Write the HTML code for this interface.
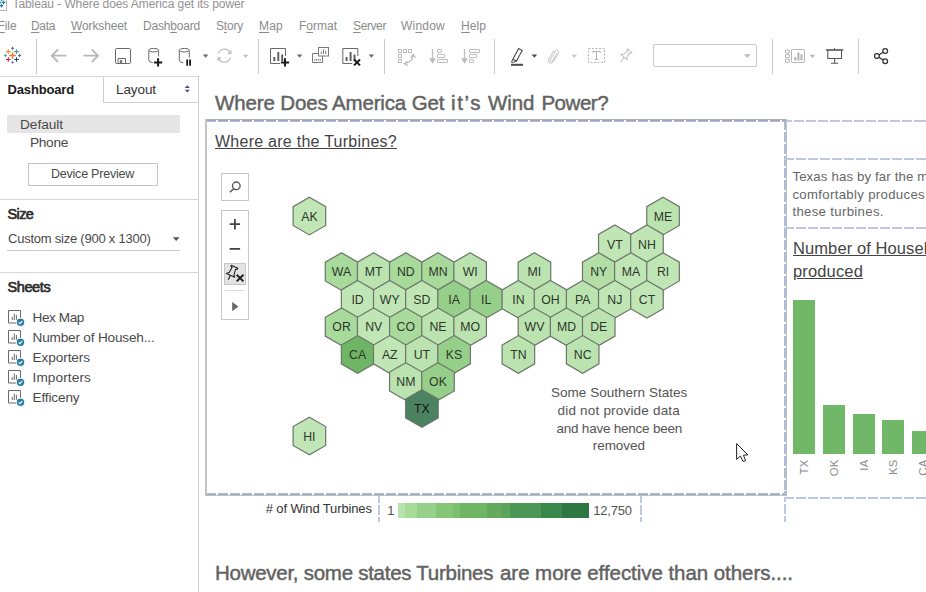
<!DOCTYPE html>
<html><head><meta charset="utf-8"><title>Tableau</title>
<style>
html,body{margin:0;padding:0;overflow:hidden;}
html{width:926px;height:592px;}
body{width:926px;height:592px;overflow:hidden;background:#fff;position:relative;font-family:"Liberation Sans", sans-serif;}
.abs{position:absolute;}
.t{position:absolute;white-space:nowrap;font-family:"Liberation Sans", sans-serif;}
.t u{text-decoration:underline;text-underline-offset:1.5px;text-decoration-thickness:1px;}
.rot{font-size:11.3px;color:#8a8a8a;transform-origin:0 0;transform:translate(0,32.6px) rotate(-90deg);white-space:nowrap;line-height:14px;letter-spacing:0.2px;width:30px;text-align:right;}
</style></head><body>
<!-- left panel -->
<div class="abs" style="left:0;top:76px;width:198px;height:1px;background:#d6d6d6"></div>
<div class="abs" style="left:198px;top:76px;width:1px;height:516px;background:#d0d0d0"></div>
<div class="abs" style="left:103px;top:76px;width:95px;height:27px;border-left:1px solid #d0d0d0;border-bottom:1px solid #d0d0d0;box-sizing:border-box"></div>
<div class="abs" style="left:7px;top:115px;width:173px;height:17.5px;background:#e6e6e6"></div>
<div class="abs" style="left:28px;top:163px;width:130px;height:23px;border:1px solid #c4c4c4;box-sizing:border-box;background:#fff"></div>
<div class="abs" style="left:0;top:199px;width:198px;height:1px;background:#d6d6d6"></div>
<div class="abs" style="left:7px;top:250px;width:173px;height:1px;background:#c8c8c8"></div>
<div class="abs" style="left:0;top:272px;width:198px;height:1px;background:#d6d6d6"></div>
<!-- toolbar separators -->
<div class="abs" style="left:36px;top:39px;width:1px;height:35px;background:#c8c8c8"></div>
<div class="abs" style="left:258px;top:39px;width:1px;height:35px;background:#c8c8c8"></div>
<div class="abs" style="left:384px;top:39px;width:1px;height:35px;background:#c8c8c8"></div>
<div class="abs" style="left:494px;top:39px;width:1px;height:35px;background:#c8c8c8"></div>
<div class="abs" style="left:772px;top:39px;width:1px;height:35px;background:#c8c8c8"></div>
<div class="abs" style="left:858px;top:39px;width:1px;height:35px;background:#c8c8c8"></div>
<div class="abs" style="left:653px;top:44px;width:104px;height:22.5px;border:1px solid #c8c8c8;border-radius:2px;box-sizing:border-box"></div>
<!-- hex container -->
<div class="abs" style="left:205px;top:119px;width:582px;height:377px;box-sizing:border-box;border:1px solid #c2c2c2;border-top-color:#b2b2b2;border-left:2px solid #c2c2c2"></div>
<div class="abs" style="left:207px;top:120px;width:579px;height:1px;background:repeating-linear-gradient(90deg,#97a7c6 0 10.4px,transparent 10.4px 12px);background-position:-1px 0"></div>
<div class="abs" style="left:207px;top:121px;width:579px;height:1px;background:repeating-linear-gradient(90deg,#b2bed7 0 10.4px,transparent 10.4px 12px);background-position:-1px 0"></div>
<div class="abs" style="left:207px;top:493px;width:579px;height:1px;background:repeating-linear-gradient(90deg,#b2bed7 0 10.4px,transparent 10.4px 12px);background-position:-1px 0"></div>
<div class="abs" style="left:207px;top:494px;width:579px;height:1px;background:repeating-linear-gradient(90deg,#97a7c6 0 10.4px,transparent 10.4px 12px);background-position:-1px 0"></div>
<div class="abs" style="left:784px;top:122px;width:2px;height:371px;background:repeating-linear-gradient(180deg,#aebbd8 0 10.4px,transparent 10.4px 12px);background-position:0 -2px"></div>
<div class="abs" style="left:787px;top:120px;width:139px;height:2px;background:repeating-linear-gradient(90deg,#bdc9e2 0 10.4px,transparent 10.4px 12px);background-position:-5px 0"></div>
<div class="abs" style="left:784px;top:158px;width:142px;height:2px;background:repeating-linear-gradient(90deg,#bdc9e2 0 10.4px,transparent 10.4px 12px);background-position:0px 0"></div>
<div class="abs" style="left:784px;top:227px;width:142px;height:2px;background:repeating-linear-gradient(90deg,#bdc9e2 0 10.4px,transparent 10.4px 12px);background-position:0px 0"></div>
<div class="abs" style="left:784px;top:497px;width:2px;height:25px;background:repeating-linear-gradient(180deg,#bdc9e2 0 10.4px,transparent 10.4px 12px);background-position:0 -5px"></div>
<div class="abs" style="left:784px;top:497px;width:142px;height:2px;background:repeating-linear-gradient(90deg,#bdc9e2 0 10.4px,transparent 10.4px 12px);background-position:0px 0"></div>
<div class="abs" style="left:378px;top:496px;width:2px;height:26px;background:repeating-linear-gradient(180deg,#bdc9e2 0 10.4px,transparent 10.4px 12px);background-position:0 -3px"></div>
<div class="abs" style="left:640px;top:496px;width:2px;height:26px;background:repeating-linear-gradient(180deg,#bdc9e2 0 10.4px,transparent 10.4px 12px);background-position:0 -3px"></div>
<!-- map toolbar -->
<div class="abs" style="left:221px;top:173px;width:28px;height:28px;border:1px solid #c6c6c6;box-sizing:border-box;background:#fff"></div>
<div class="abs" style="left:221px;top:210px;width:28px;height:110px;border:1px solid #c6c6c6;box-sizing:border-box;background:#fff"></div>
<div class="abs" style="left:224px;top:263px;width:22px;height:22px;border:1px solid #c6c6c6;box-sizing:border-box;background:#e4e4e4"></div>
<div class="abs" style="left:225px;top:290px;width:20px;height:1px;background:#dcdcdc"></div>
<svg class="abs" style="left:0;top:0" width="926" height="592" viewBox="0 0 926 592">
<polygon points="309.40,197.30 325.68,206.70 325.68,225.50 309.40,234.90 293.12,225.50 293.12,206.70" fill="#c1e6b6" stroke="#6b7669" stroke-width="1.2"/>
<polygon points="663.05,197.30 679.33,206.70 679.33,225.50 663.05,234.90 646.77,225.50 646.77,206.70" fill="#bbe3b0" stroke="#6b7669" stroke-width="1.2"/>
<polygon points="614.83,225.00 631.11,234.40 631.11,253.20 614.83,262.60 598.54,253.20 598.54,234.40" fill="#c1e6b6" stroke="#6b7669" stroke-width="1.2"/>
<polygon points="646.97,225.00 663.26,234.40 663.26,253.20 646.97,262.60 630.69,253.20 630.69,234.40" fill="#c1e6b6" stroke="#6b7669" stroke-width="1.2"/>
<polygon points="341.55,252.80 357.83,262.20 357.83,281.00 341.55,290.40 325.27,281.00 325.27,262.20" fill="#a8da9b" stroke="#6b7669" stroke-width="1.2"/>
<polygon points="373.70,252.80 389.98,262.20 389.98,281.00 373.70,290.40 357.42,281.00 357.42,262.20" fill="#bbe3b0" stroke="#6b7669" stroke-width="1.2"/>
<polygon points="405.85,252.80 422.13,262.20 422.13,281.00 405.85,290.40 389.57,281.00 389.57,262.20" fill="#a8da9b" stroke="#6b7669" stroke-width="1.2"/>
<polygon points="438.00,252.80 454.28,262.20 454.28,281.00 438.00,290.40 421.72,281.00 421.72,262.20" fill="#a8da9b" stroke="#6b7669" stroke-width="1.2"/>
<polygon points="470.15,252.80 486.43,262.20 486.43,281.00 470.15,290.40 453.87,281.00 453.87,262.20" fill="#bbe3b0" stroke="#6b7669" stroke-width="1.2"/>
<polygon points="534.45,252.80 550.73,262.20 550.73,281.00 534.45,290.40 518.17,281.00 518.17,262.20" fill="#bbe3b0" stroke="#6b7669" stroke-width="1.2"/>
<polygon points="598.75,252.80 615.03,262.20 615.03,281.00 598.75,290.40 582.47,281.00 582.47,262.20" fill="#b3dfa7" stroke="#6b7669" stroke-width="1.2"/>
<polygon points="630.90,252.80 647.18,262.20 647.18,281.00 630.90,290.40 614.62,281.00 614.62,262.20" fill="#c1e6b6" stroke="#6b7669" stroke-width="1.2"/>
<polygon points="663.05,252.80 679.33,262.20 679.33,281.00 663.05,290.40 646.77,281.00 646.77,262.20" fill="#c1e6b6" stroke="#6b7669" stroke-width="1.2"/>
<polygon points="357.62,280.50 373.91,289.90 373.91,308.70 357.62,318.10 341.34,308.70 341.34,289.90" fill="#c1e6b6" stroke="#6b7669" stroke-width="1.2"/>
<polygon points="389.77,280.50 406.06,289.90 406.06,308.70 389.77,318.10 373.49,308.70 373.49,289.90" fill="#c1e6b6" stroke="#6b7669" stroke-width="1.2"/>
<polygon points="421.92,280.50 438.21,289.90 438.21,308.70 421.92,318.10 405.64,308.70 405.64,289.90" fill="#c1e6b6" stroke="#6b7669" stroke-width="1.2"/>
<polygon points="454.07,280.50 470.36,289.90 470.36,308.70 454.07,318.10 437.79,308.70 437.79,289.90" fill="#96cf89" stroke="#6b7669" stroke-width="1.2"/>
<polygon points="486.22,280.50 502.51,289.90 502.51,308.70 486.22,318.10 469.94,308.70 469.94,289.90" fill="#96cf89" stroke="#6b7669" stroke-width="1.2"/>
<polygon points="518.38,280.50 534.66,289.90 534.66,308.70 518.38,318.10 502.09,308.70 502.09,289.90" fill="#bbe3b0" stroke="#6b7669" stroke-width="1.2"/>
<polygon points="550.52,280.50 566.81,289.90 566.81,308.70 550.52,318.10 534.24,308.70 534.24,289.90" fill="#bbe3b0" stroke="#6b7669" stroke-width="1.2"/>
<polygon points="582.67,280.50 598.96,289.90 598.96,308.70 582.67,318.10 566.39,308.70 566.39,289.90" fill="#bbe3b0" stroke="#6b7669" stroke-width="1.2"/>
<polygon points="614.83,280.50 631.11,289.90 631.11,308.70 614.83,318.10 598.54,308.70 598.54,289.90" fill="#c1e6b6" stroke="#6b7669" stroke-width="1.2"/>
<polygon points="646.97,280.50 663.26,289.90 663.26,308.70 646.97,318.10 630.69,308.70 630.69,289.90" fill="#c1e6b6" stroke="#6b7669" stroke-width="1.2"/>
<polygon points="341.55,307.90 357.83,317.30 357.83,336.10 341.55,345.50 325.27,336.10 325.27,317.30" fill="#a8da9b" stroke="#6b7669" stroke-width="1.2"/>
<polygon points="373.70,307.90 389.98,317.30 389.98,336.10 373.70,345.50 357.42,336.10 357.42,317.30" fill="#c1e6b6" stroke="#6b7669" stroke-width="1.2"/>
<polygon points="405.85,307.90 422.13,317.30 422.13,336.10 405.85,345.50 389.57,336.10 389.57,317.30" fill="#a8da9b" stroke="#6b7669" stroke-width="1.2"/>
<polygon points="438.00,307.90 454.28,317.30 454.28,336.10 438.00,345.50 421.72,336.10 421.72,317.30" fill="#bbe3b0" stroke="#6b7669" stroke-width="1.2"/>
<polygon points="470.15,307.90 486.43,317.30 486.43,336.10 470.15,345.50 453.87,336.10 453.87,317.30" fill="#bbe3b0" stroke="#6b7669" stroke-width="1.2"/>
<polygon points="534.45,307.90 550.73,317.30 550.73,336.10 534.45,345.50 518.17,336.10 518.17,317.30" fill="#bbe3b0" stroke="#6b7669" stroke-width="1.2"/>
<polygon points="566.60,307.90 582.88,317.30 582.88,336.10 566.60,345.50 550.32,336.10 550.32,317.30" fill="#bbe3b0" stroke="#6b7669" stroke-width="1.2"/>
<polygon points="598.75,307.90 615.03,317.30 615.03,336.10 598.75,345.50 582.47,336.10 582.47,317.30" fill="#bbe3b0" stroke="#6b7669" stroke-width="1.2"/>
<polygon points="357.62,335.60 373.91,345.00 373.91,363.80 357.62,373.20 341.34,363.80 341.34,345.00" fill="#6fb566" stroke="#6b7669" stroke-width="1.2"/>
<polygon points="389.77,335.60 406.06,345.00 406.06,363.80 389.77,373.20 373.49,363.80 373.49,345.00" fill="#c1e6b6" stroke="#6b7669" stroke-width="1.2"/>
<polygon points="421.92,335.60 438.21,345.00 438.21,363.80 421.92,373.20 405.64,363.80 405.64,345.00" fill="#bbe3b0" stroke="#6b7669" stroke-width="1.2"/>
<polygon points="454.07,335.60 470.36,345.00 470.36,363.80 454.07,373.20 437.79,363.80 437.79,345.00" fill="#96cf89" stroke="#6b7669" stroke-width="1.2"/>
<polygon points="518.38,335.60 534.66,345.00 534.66,363.80 518.38,373.20 502.09,363.80 502.09,345.00" fill="#bbe3b0" stroke="#6b7669" stroke-width="1.2"/>
<polygon points="582.67,335.60 598.96,345.00 598.96,363.80 582.67,373.20 566.39,363.80 566.39,345.00" fill="#bbe3b0" stroke="#6b7669" stroke-width="1.2"/>
<polygon points="405.85,362.70 422.13,372.10 422.13,390.90 405.85,400.30 389.57,390.90 389.57,372.10" fill="#bbe3b0" stroke="#6b7669" stroke-width="1.2"/>
<polygon points="438.00,362.70 454.28,372.10 454.28,390.90 438.00,400.30 421.72,390.90 421.72,372.10" fill="#96cf89" stroke="#6b7669" stroke-width="1.2"/>
<polygon points="421.92,389.70 438.21,399.10 438.21,417.90 421.92,427.30 405.64,417.90 405.64,399.10" fill="#4b8260" stroke="#6b7669" stroke-width="1.2"/>
<polygon points="309.40,417.20 325.68,426.60 325.68,445.40 309.40,454.80 293.12,445.40 293.12,426.60" fill="#c1e6b6" stroke="#6b7669" stroke-width="1.2"/>
<text x="309.40" y="220.80" text-anchor="middle" font-size="12.3" fill="#2c362a" font-family="Liberation Sans">AK</text>
<text x="663.05" y="220.80" text-anchor="middle" font-size="12.3" fill="#2c362a" font-family="Liberation Sans">ME</text>
<text x="614.83" y="248.50" text-anchor="middle" font-size="12.3" fill="#2c362a" font-family="Liberation Sans">VT</text>
<text x="646.97" y="248.50" text-anchor="middle" font-size="12.3" fill="#2c362a" font-family="Liberation Sans">NH</text>
<text x="341.55" y="276.30" text-anchor="middle" font-size="12.3" fill="#2c362a" font-family="Liberation Sans">WA</text>
<text x="373.70" y="276.30" text-anchor="middle" font-size="12.3" fill="#2c362a" font-family="Liberation Sans">MT</text>
<text x="405.85" y="276.30" text-anchor="middle" font-size="12.3" fill="#2c362a" font-family="Liberation Sans">ND</text>
<text x="438.00" y="276.30" text-anchor="middle" font-size="12.3" fill="#2c362a" font-family="Liberation Sans">MN</text>
<text x="470.15" y="276.30" text-anchor="middle" font-size="12.3" fill="#2c362a" font-family="Liberation Sans">WI</text>
<text x="534.45" y="276.30" text-anchor="middle" font-size="12.3" fill="#2c362a" font-family="Liberation Sans">MI</text>
<text x="598.75" y="276.30" text-anchor="middle" font-size="12.3" fill="#2c362a" font-family="Liberation Sans">NY</text>
<text x="630.90" y="276.30" text-anchor="middle" font-size="12.3" fill="#2c362a" font-family="Liberation Sans">MA</text>
<text x="663.05" y="276.30" text-anchor="middle" font-size="12.3" fill="#2c362a" font-family="Liberation Sans">RI</text>
<text x="357.62" y="304.00" text-anchor="middle" font-size="12.3" fill="#2c362a" font-family="Liberation Sans">ID</text>
<text x="389.77" y="304.00" text-anchor="middle" font-size="12.3" fill="#2c362a" font-family="Liberation Sans">WY</text>
<text x="421.92" y="304.00" text-anchor="middle" font-size="12.3" fill="#2c362a" font-family="Liberation Sans">SD</text>
<text x="454.07" y="304.00" text-anchor="middle" font-size="12.3" fill="#2c362a" font-family="Liberation Sans">IA</text>
<text x="486.22" y="304.00" text-anchor="middle" font-size="12.3" fill="#2c362a" font-family="Liberation Sans">IL</text>
<text x="518.38" y="304.00" text-anchor="middle" font-size="12.3" fill="#2c362a" font-family="Liberation Sans">IN</text>
<text x="550.52" y="304.00" text-anchor="middle" font-size="12.3" fill="#2c362a" font-family="Liberation Sans">OH</text>
<text x="582.67" y="304.00" text-anchor="middle" font-size="12.3" fill="#2c362a" font-family="Liberation Sans">PA</text>
<text x="614.83" y="304.00" text-anchor="middle" font-size="12.3" fill="#2c362a" font-family="Liberation Sans">NJ</text>
<text x="646.97" y="304.00" text-anchor="middle" font-size="12.3" fill="#2c362a" font-family="Liberation Sans">CT</text>
<text x="341.55" y="331.40" text-anchor="middle" font-size="12.3" fill="#2c362a" font-family="Liberation Sans">OR</text>
<text x="373.70" y="331.40" text-anchor="middle" font-size="12.3" fill="#2c362a" font-family="Liberation Sans">NV</text>
<text x="405.85" y="331.40" text-anchor="middle" font-size="12.3" fill="#2c362a" font-family="Liberation Sans">CO</text>
<text x="438.00" y="331.40" text-anchor="middle" font-size="12.3" fill="#2c362a" font-family="Liberation Sans">NE</text>
<text x="470.15" y="331.40" text-anchor="middle" font-size="12.3" fill="#2c362a" font-family="Liberation Sans">MO</text>
<text x="534.45" y="331.40" text-anchor="middle" font-size="12.3" fill="#2c362a" font-family="Liberation Sans">WV</text>
<text x="566.60" y="331.40" text-anchor="middle" font-size="12.3" fill="#2c362a" font-family="Liberation Sans">MD</text>
<text x="598.75" y="331.40" text-anchor="middle" font-size="12.3" fill="#2c362a" font-family="Liberation Sans">DE</text>
<text x="357.62" y="359.10" text-anchor="middle" font-size="12.3" fill="#2c362a" font-family="Liberation Sans">CA</text>
<text x="389.77" y="359.10" text-anchor="middle" font-size="12.3" fill="#2c362a" font-family="Liberation Sans">AZ</text>
<text x="421.92" y="359.10" text-anchor="middle" font-size="12.3" fill="#2c362a" font-family="Liberation Sans">UT</text>
<text x="454.07" y="359.10" text-anchor="middle" font-size="12.3" fill="#2c362a" font-family="Liberation Sans">KS</text>
<text x="518.38" y="359.10" text-anchor="middle" font-size="12.3" fill="#2c362a" font-family="Liberation Sans">TN</text>
<text x="582.67" y="359.10" text-anchor="middle" font-size="12.3" fill="#2c362a" font-family="Liberation Sans">NC</text>
<text x="405.85" y="386.20" text-anchor="middle" font-size="12.3" fill="#2c362a" font-family="Liberation Sans">NM</text>
<text x="438.00" y="386.20" text-anchor="middle" font-size="12.3" fill="#2c362a" font-family="Liberation Sans">OK</text>
<text x="421.92" y="413.20" text-anchor="middle" font-size="12.3" fill="#10160f" font-family="Liberation Sans">TX</text>
<text x="309.40" y="440.70" text-anchor="middle" font-size="12.3" fill="#2c362a" font-family="Liberation Sans">HI</text>
</svg>
<div class="abs" style="left:398.0px;top:502.5px;width:6.8px;height:15px;background:#b9e3ae"></div>
<div class="abs" style="left:404.5px;top:502.5px;width:12.8px;height:15px;background:#a6db98"></div>
<div class="abs" style="left:417.0px;top:502.5px;width:19.3px;height:15px;background:#96d08a"></div>
<div class="abs" style="left:436.0px;top:502.5px;width:17.3px;height:15px;background:#85c777"></div>
<div class="abs" style="left:453.0px;top:502.5px;width:7.3px;height:15px;background:#7bc06f"></div>
<div class="abs" style="left:460.0px;top:502.5px;width:27.3px;height:15px;background:#70b566"></div>
<div class="abs" style="left:487.0px;top:502.5px;width:14.3px;height:15px;background:#65a95f"></div>
<div class="abs" style="left:501.0px;top:502.5px;width:9.6px;height:15px;background:#5da45b"></div>
<div class="abs" style="left:510.3px;top:502.5px;width:31.0px;height:15px;background:#4c9656"></div>
<div class="abs" style="left:541.0px;top:502.5px;width:21.3px;height:15px;background:#39884a"></div>
<div class="abs" style="left:562.0px;top:502.5px;width:26.6px;height:15px;background:#2e7743"></div>
<div class="abs" style="left:793px;top:300px;width:22px;height:153.5px;background:#70b768"></div>
<div class="abs rot" style="left:797px;top:457px;">TX</div>
<div class="abs" style="left:823px;top:405px;width:22px;height:48.5px;background:#70b768"></div>
<div class="abs rot" style="left:827px;top:457px;">OK</div>
<div class="abs" style="left:853px;top:414px;width:22px;height:39.5px;background:#70b768"></div>
<div class="abs rot" style="left:857px;top:457px;">IA</div>
<div class="abs" style="left:882px;top:420px;width:22px;height:33.5px;background:#70b768"></div>
<div class="abs rot" style="left:886px;top:457px;">KS</div>
<div class="abs" style="left:912px;top:431px;width:22px;height:22.5px;background:#70b768"></div>
<div class="abs rot" style="left:916px;top:457px;">CA</div>
<svg class="abs" style="left:0;top:0" width="926" height="592" viewBox="0 0 926 592" fill="none">
<path d="M-1 10.5H6.5V-1" stroke="#b4b4b4" stroke-width="1"/>
<path d="M1.70 2.40H5.30M3.50 0.60V4.20" stroke="#2a7fa5" stroke-width="1.3"/>
<path d="M-0.30 5.60H3.30M1.50 3.80V7.40" stroke="#2a7fa5" stroke-width="1.3"/>
<path d="M-2.40 2.40H1.20M-0.60 0.60V4.20" stroke="#2a7fa5" stroke-width="1.3"/>
<path d="M-0.30 -0.80H3.30M1.50 -2.60V1.00" stroke="#2a7fa5" stroke-width="1.3"/>
<path d="M9.20 55.50H15.80M12.50 52.20V58.80" stroke="#e8762d" stroke-width="1.3"/>
<path d="M6.00 51.60H10.60M8.30 49.30V53.90" stroke="#eb912c" stroke-width="1.1"/>
<path d="M14.20 51.60H18.80M16.50 49.30V53.90" stroke="#59969b" stroke-width="1.1"/>
<path d="M6.00 59.50H10.60M8.30 57.20V61.80" stroke="#c72037" stroke-width="1.1"/>
<path d="M14.20 59.50H18.80M16.50 57.20V61.80" stroke="#1f457e" stroke-width="1.1"/>
<path d="M11.00 48.30H14.00M12.50 46.80V49.80" stroke="#5c6692" stroke-width="1"/>
<path d="M3.90 55.50H6.90M5.40 54.00V57.00" stroke="#5aa5a0" stroke-width="1"/>
<path d="M18.10 55.50H21.10M19.60 54.00V57.00" stroke="#5c6692" stroke-width="1"/>
<path d="M11.00 62.40H14.00M12.50 60.90V63.90" stroke="#8a86bd" stroke-width="1"/>
<path d="M66.5 55.7H52M58 49.5L51.8 55.7L58 62" stroke="#b9b9b9" stroke-width="1.8"/>
<path d="M83.3 55.7H97.8M91.8 49.5L98 55.7L91.8 62" stroke="#b9b9b9" stroke-width="1.8"/>
<rect x="115.5" y="48.5" width="15" height="15" rx="1" stroke="#6a6a6a"/>
<path d="M118 63.5V58.5H125.5V63.5" stroke="#6a6a6a"/><rect x="119.8" y="60" width="2.4" height="3.5" fill="#777"/>
<ellipse cx="153.70" cy="50.20" rx="4.90" ry="1.80" stroke="#6a6a6a"/>
<path d="M148.80 50.20V60.00Q148.80 62.50 152.80 62.80" stroke="#6a6a6a"/>
<path d="M158.60 50.20V56.50" stroke="#6a6a6a"/>
<path d="M154.00 62.40H162.20M158.10 58.30V66.50" stroke="#1a1a1a" stroke-width="2"/>
<ellipse cx="184.30" cy="50.20" rx="5.00" ry="1.80" stroke="#6a6a6a"/>
<path d="M179.30 50.20V60.00Q179.30 62.50 183.30 62.80" stroke="#6a6a6a"/>
<path d="M189.30 50.20V57.50" stroke="#6a6a6a"/>
<path d="M187.2 59.4V65.8M190.1 59.4V65.8" stroke="#1a1a1a" stroke-width="1.8"/>
<path d="M202.80 54.60H208.40L205.60 57.80Z" fill="#6a6a6a"/>
<path d="M218.3 53.6A6.6 6.6 0 0 1 230.2 52.3" stroke="#c2c2c2" stroke-width="1.3"/><path d="M231.6 50L231.4 54.4L227.2 53.2Z" fill="#c2c2c2"/>
<path d="M230.6 57.6A6.6 6.6 0 0 1 218.7 58.9" stroke="#c2c2c2" stroke-width="1.3"/><path d="M217.3 61.2L217.5 56.8L221.7 58Z" fill="#c2c2c2"/>
<path d="M242.80 54.80H248.40L245.60 58.00Z" fill="#c2c2c2"/>
<path d="M280.00 63.5H270.50V48.5H285.50V56" stroke="#6a6a6a"/>
<path d="M274.30 61V57M278.30 61V52M282.20 61V54.5" stroke="#5a5a5a" stroke-width="1.9"/>
<path d="M280.90 62.40H289.10M285.00 58.30V66.50" stroke="#1a1a1a" stroke-width="2"/>
<path d="M296.80 54.60H302.40L299.60 57.80Z" fill="#6a6a6a"/>
<path d="M318.5 53.5H312.5V62.5H322.5V56" stroke="#7a7a7a"/>
<rect x="318.5" y="47.5" width="10" height="8.5" stroke="#7a7a7a" fill="#fff"/>
<path d="M321.3 54V51.5M323.5 54V49.5M325.7 54V50.8" stroke="#7a7a7a" stroke-width="1"/>
<path d="M314.8 60.8V58.8M316.6 60.8V58.8M318.4 60.8V58.8M320.2 60.8V58.8" stroke="#7a7a7a" stroke-width="0.9"/>
<path d="M352.30 63.5H342.80V48.5H357.80V56" stroke="#6a6a6a"/>
<path d="M346.60 61V57M350.60 61V52M354.50 61V54.5" stroke="#5a5a5a" stroke-width="1.9"/>
<path d="M354 59.5L360 65.4M360 59.5L354 65.4" stroke="#1a1a1a" stroke-width="2"/>
<path d="M368.60 54.60H374.20L371.40 57.80Z" fill="#6a6a6a"/>
<rect x="398.5" y="49.5" width="3" height="3" stroke="#bdbdbd"/>
<rect x="403.5" y="49.5" width="3" height="3" stroke="#bdbdbd"/>
<rect x="408.5" y="49.5" width="3" height="3" stroke="#bdbdbd"/>
<rect x="398.5" y="54.5" width="3" height="3" stroke="#bdbdbd"/>
<rect x="398.5" y="59.5" width="3" height="3" stroke="#bdbdbd"/>
<path d="M405.5 63.3Q412.5 62 413 55.5" stroke="#bdbdbd" stroke-width="1.3"/>
<path d="M410.8 57.6L413.2 54.4L415.4 57.8M407.5 61.3L404.3 63.6L407.7 65.6" stroke="#bdbdbd" stroke-width="1.3"/>
<path d="M432.5 49V62M430.2 59L432.5 62.6L434.8 59Z" stroke="#bdbdbd" stroke-width="1.3" fill="#bdbdbd"/>
<rect x="437.5" y="49.5" width="3.8" height="3" rx="0.4" stroke="#bdbdbd"/>
<rect x="437.5" y="54.5" width="7.2" height="3" rx="0.4" stroke="#bdbdbd"/>
<rect x="437.5" y="59.5" width="10" height="3" rx="0.4" stroke="#bdbdbd"/>
<path d="M464.5 49V62M462.2 59L464.5 62.6L466.8 59Z" stroke="#bdbdbd" stroke-width="1.3" fill="#bdbdbd"/>
<rect x="469.5" y="49.5" width="10" height="3" rx="0.4" stroke="#bdbdbd"/>
<rect x="469.5" y="54.5" width="7.2" height="3" rx="0.4" stroke="#bdbdbd"/>
<rect x="469.5" y="59.5" width="3.8" height="3" rx="0.4" stroke="#bdbdbd"/>
<path d="M511 64.8H523" stroke="#4a4a4a" stroke-width="2"/>
<path d="M518.6 48.6L522.2 50.4L516.5 61L512.9 59.2Z" stroke="#4a4a4a" stroke-width="1.1"/><path d="M512.9 59.2L511.4 62.3L513.5 62.2L516.5 61" stroke="#4a4a4a" stroke-width="1"/>
<path d="M531.60 54.60H537.20L534.40 57.80Z" fill="#4a4a4a"/>
<path d="M557 53.4L552.6 60.6Q551.6 62 550.6 61.3Q549.7 60.6 550.6 59.1L555.4 51.3Q556.6 49.6 558 50.5Q559.3 51.5 558.3 53.3L553.2 61.7Q551.3 64.3 549.2 62.9Q547.3 61.4 548.8 58.8L554 50.3" stroke="#c2c2c2" stroke-width="1"/>
<path d="M571.40 54.80H577.00L574.20 58.00Z" fill="#c8c8c8"/>
<rect x="588.5" y="48.5" width="16" height="14" stroke="#b5b5b5" stroke-dasharray="2 1.5"/>
<path d="M592.8 53V51.5H600.2V53M596.5 51.5V59.5M594.8 59.5H598.2" stroke="#b0b0b0" stroke-width="1"/>
<g transform="translate(857.5,-217) scale(-1,1) translate(0,0)">
</g>
<path d="M627.5 48.8L632 52.6L630.8 53.4L629.6 52.9L626.8 57.2L627.2 59.8L620.8 54.3L623.6 54.3L627.6 51L627.1 49.7Z" stroke="#c0c0c0" stroke-width="1.1" stroke-linejoin="round"/><path d="M624 57.2L620.6 62.3" stroke="#c0c0c0" stroke-width="1.1"/>
<path d="M743.90 54.20H750.70L747.30 58.00Z" fill="#bdbdbd"/>
<rect x="785.5" y="50.0" width="3.8" height="3" rx="0.2" stroke="#b4b4b4"/>
<rect x="785.5" y="54.6" width="3.8" height="3" rx="0.2" stroke="#b4b4b4"/>
<rect x="785.5" y="59.2" width="3.8" height="3" rx="0.2" stroke="#b4b4b4"/>
<rect x="791.5" y="49.5" width="13" height="13" rx="0.8" stroke="#b4b4b4"/>
<path d="M795.3 60.5V57M798.4 60.5V52.5M801.5 60.5V54.5" stroke="#b4b4b4" stroke-width="2.1"/>
<path d="M809.60 54.80H815.20L812.40 58.00Z" fill="#b8b8b8"/>
<path d="M826 50H843.3" stroke="#555" stroke-width="1.6"/><path d="M827.8 50.5V58.5H841.5V50.5" stroke="#555" stroke-width="1.05"/><path d="M834.6 58.5V63M831 63.2H838.2M834.6 48V49.5" stroke="#555" stroke-width="1.05"/>
<path d="M879 55L883 52.2M879 57.2L883 60" stroke="#333" stroke-width="1.25"/>
<circle cx="876.9" cy="56.1" r="2.4" stroke="#333" stroke-width="1.25"/>
<circle cx="885.2" cy="50.9" r="2.4" stroke="#333" stroke-width="1.25"/>
<circle cx="885.2" cy="61.3" r="2.4" stroke="#333" stroke-width="1.25"/>
<path d="M184.7 88L187.3 85.2L189.9 88ZM184.7 89.8L187.3 92.6L189.9 89.8Z" fill="#4c5478"/>
<path d="M172.80 237.30H179.60L176.20 241.00Z" fill="#555"/>
<path d="M16.5 323.0H8.5V310.5H20.5V318.0" stroke="#6a6a6a"/>
<path d="M12.2 320.0V317.0M14.3 320.0V313.5M16.4 320.0V315.0" stroke="#6a6a6a" stroke-width="1"/>
<circle cx="20.5" cy="322.3" r="4.1" fill="#2b7d9e" stroke="#fff" stroke-width="0.8"/>
<path d="M18.7 322.4L20 323.7L22.4 321.0" stroke="#fff" stroke-width="1.1"/>
<path d="M16.5 343.0H8.5V330.5H20.5V338.0" stroke="#6a6a6a"/>
<path d="M12.2 340.0V337.0M14.3 340.0V333.5M16.4 340.0V335.0" stroke="#6a6a6a" stroke-width="1"/>
<circle cx="20.5" cy="342.3" r="4.1" fill="#2b7d9e" stroke="#fff" stroke-width="0.8"/>
<path d="M18.7 342.4L20 343.7L22.4 341.0" stroke="#fff" stroke-width="1.1"/>
<path d="M16.5 363.0H8.5V350.5H20.5V358.0" stroke="#6a6a6a"/>
<path d="M12.2 360.0V357.0M14.3 360.0V353.5M16.4 360.0V355.0" stroke="#6a6a6a" stroke-width="1"/>
<circle cx="20.5" cy="362.3" r="4.1" fill="#2b7d9e" stroke="#fff" stroke-width="0.8"/>
<path d="M18.7 362.4L20 363.7L22.4 361.0" stroke="#fff" stroke-width="1.1"/>
<path d="M16.5 383.0H8.5V370.5H20.5V378.0" stroke="#6a6a6a"/>
<path d="M12.2 380.0V377.0M14.3 380.0V373.5M16.4 380.0V375.0" stroke="#6a6a6a" stroke-width="1"/>
<circle cx="20.5" cy="382.3" r="4.1" fill="#2b7d9e" stroke="#fff" stroke-width="0.8"/>
<path d="M18.7 382.4L20 383.7L22.4 381.0" stroke="#fff" stroke-width="1.1"/>
<path d="M16.5 403.0H8.5V390.5H20.5V398.0" stroke="#6a6a6a"/>
<path d="M12.2 400.0V397.0M14.3 400.0V393.5M16.4 400.0V395.0" stroke="#6a6a6a" stroke-width="1"/>
<circle cx="20.5" cy="402.3" r="4.1" fill="#2b7d9e" stroke="#fff" stroke-width="0.8"/>
<path d="M18.7 402.4L20 403.7L22.4 401.0" stroke="#fff" stroke-width="1.1"/>
<circle cx="236.3" cy="185.8" r="3.8" stroke="#555" stroke-width="1.3"/><path d="M233.7 188.7L229.8 192.2" stroke="#555" stroke-width="1.5"/>
<path d="M229.70 224.20H240.10M234.90 219.00V229.40" stroke="#444" stroke-width="1.8"/>
<path d="M229.7 248.9H240.1" stroke="#444" stroke-width="1.8"/>
<path d="M231.20 265.30L237.80 268.30L236.90 269.50L235.60 269.40L234.00 274.60L234.70 277.30L226.40 273.40L229.40 272.20L232.10 267.30L231.00 266.40Z" stroke="#222" stroke-width="1.1" stroke-linejoin="round"/>
<path d="M230.30 275.30L228.30 279.80" stroke="#222" stroke-width="1.1"/>
<path d="M236.7 274.7L243.4 281.4M243.4 274.7L236.7 281.4" stroke="#222" stroke-width="2"/>
<path d="M232.2 302V311.3L238.4 306.6Z" fill="#666"/>
<path d="M736.6 443.6V459.4L740.4 456.1L743.1 461.6L745.6 460.5L743.4 455.2L747.9 454.9Z" fill="#fff" stroke="#222" stroke-width="1" stroke-linejoin="miter"/>
</svg>
<span id="ttl" class="t" style="left:12.50px;top:-3px;font-size:12px;line-height:14px;font-weight:400;color:#929292;letter-spacing:-0.082px;">Tableau - Where does America get its power</span>
<span id="m0" class="t" style="left:-2.50px;top:19px;font-size:12px;line-height:14px;font-weight:400;color:#8b8b8b;letter-spacing:-0.090px;"><u>F</u>ile</span>
<span id="m1" class="t" style="left:31.00px;top:19px;font-size:12px;line-height:14px;font-weight:400;color:#8b8b8b;letter-spacing:-0.340px;"><u>D</u>ata</span>
<span id="m2" class="t" style="left:71.00px;top:19px;font-size:12px;line-height:14px;font-weight:400;color:#8b8b8b;letter-spacing:-0.127px;"><u>W</u>orksheet</span>
<span id="m3" class="t" style="left:143.00px;top:19px;font-size:12px;line-height:14px;font-weight:400;color:#8b8b8b;letter-spacing:-0.193px;">Dash<u>b</u>oard</span>
<span id="m4" class="t" style="left:216.00px;top:19px;font-size:12px;line-height:14px;font-weight:400;color:#8b8b8b;letter-spacing:-0.206px;">S<u>t</u>ory</span>
<span id="m5" class="t" style="left:259.00px;top:19px;font-size:12px;line-height:14px;font-weight:400;color:#8b8b8b;letter-spacing:0.214px;"><u>M</u>ap</span>
<span id="m6" class="t" style="left:299.00px;top:19px;font-size:12px;line-height:14px;font-weight:400;color:#8b8b8b;letter-spacing:-0.005px;">F<u>o</u>rmat</span>
<span id="m7" class="t" style="left:353.00px;top:19px;font-size:12px;line-height:14px;font-weight:400;color:#8b8b8b;letter-spacing:-0.393px;"><u>S</u>erver</span>
<span id="m8" class="t" style="left:401.00px;top:19px;font-size:12px;line-height:14px;font-weight:400;color:#8b8b8b;letter-spacing:0.216px;">Wi<u>n</u>dow</span>
<span id="m9" class="t" style="left:461.00px;top:19px;font-size:12px;line-height:14px;font-weight:400;color:#8b8b8b;letter-spacing:0.078px;"><u>H</u>elp</span>
<span id="dash" class="t" style="left:7.50px;top:82px;font-size:13px;line-height:15px;font-weight:700;color:#1a1a1a;letter-spacing:-0.156px;">Dashboard</span>
<span id="lay" class="t" style="left:116.00px;top:82px;font-size:13.5px;line-height:15px;font-weight:400;color:#333;letter-spacing:-0.091px;">Layout</span>
<span id="def" class="t" style="left:20.00px;top:117px;font-size:13.7px;line-height:15px;font-weight:400;color:#4a4a4a;letter-spacing:-0.054px;">Default</span>
<span id="pho" class="t" style="left:30.00px;top:135px;font-size:13.7px;line-height:15px;font-weight:400;color:#4a4a4a;letter-spacing:-0.319px;">Phone</span>
<span id="dev" class="t" style="left:51.00px;top:167px;font-size:12.5px;line-height:14px;font-weight:400;color:#4a4a4a;letter-spacing:-0.224px;">Device Preview</span>
<span id="size" class="t" style="left:7.50px;top:206px;font-size:14.5px;line-height:16px;font-weight:400;color:#2a2a2a;letter-spacing:-0.605px;-webkit-text-stroke:0.65px #2a2a2a;">Size</span>
<span id="cus" class="t" style="left:8.00px;top:231px;font-size:13px;line-height:15px;font-weight:400;color:#4a4a4a;letter-spacing:-0.234px;">Custom size (900 x 1300)</span>
<span id="sheets" class="t" style="left:7.50px;top:279px;font-size:14.5px;line-height:16px;font-weight:400;color:#2a2a2a;letter-spacing:-0.393px;-webkit-text-stroke:0.65px #2a2a2a;">Sheets</span>
<span id="sh0" class="t" style="left:32.50px;top:310px;font-size:13.6px;line-height:15px;font-weight:400;color:#4a4a4a;letter-spacing:-0.415px;">Hex Map</span>
<span id="sh1" class="t" style="left:32.50px;top:330px;font-size:13.6px;line-height:15px;font-weight:400;color:#4a4a4a;letter-spacing:-0.181px;">Number of Househ...</span>
<span id="sh2" class="t" style="left:32.50px;top:350px;font-size:13.6px;line-height:15px;font-weight:400;color:#4a4a4a;letter-spacing:-0.075px;">Exporters</span>
<span id="sh3" class="t" style="left:32.50px;top:370px;font-size:13.6px;line-height:15px;font-weight:400;color:#4a4a4a;letter-spacing:0.120px;">Importers</span>
<span id="sh4" class="t" style="left:32.50px;top:390px;font-size:13.6px;line-height:15px;font-weight:400;color:#4a4a4a;letter-spacing:-0.139px;">Efficeny</span>
<span id="h1_0" class="t" style="left:215.00px;top:91px;font-size:20.5px;line-height:23px;font-weight:400;color:#626262;letter-spacing:-0.142px;-webkit-text-stroke:0.45px #626262;">Where Does America Get</span>
<span id="h1_1" class="t" style="left:451.00px;top:91px;font-size:20.5px;line-height:23px;font-weight:400;color:#626262;letter-spacing:1.578px;-webkit-text-stroke:0.45px #626262;">it’s</span>
<span id="h1_2" class="t" style="left:487.90px;top:91px;font-size:20.5px;line-height:23px;font-weight:400;color:#626262;letter-spacing:-0.055px;-webkit-text-stroke:0.45px #626262;">Wind</span>
<span id="h1_3" class="t" style="left:541.40px;top:91px;font-size:20.5px;line-height:23px;font-weight:400;color:#626262;letter-spacing:-0.453px;-webkit-text-stroke:0.45px #626262;">Power?</span>
<span id="h2" class="t" style="left:215.00px;top:133px;font-size:16px;line-height:17px;font-weight:400;color:#444;letter-spacing:0.257px;text-decoration:underline;text-underline-offset:1px;text-decoration-thickness:1px;">Where are the Turbines?</span>
<span id="an0" class="t" style="left:551.00px;top:385px;font-size:13.5px;line-height:15px;font-weight:400;color:#555;letter-spacing:0.023px;">Some Southern States</span>
<span id="an1" class="t" style="left:557.60px;top:403px;font-size:13.5px;line-height:15px;font-weight:400;color:#555;letter-spacing:0.190px;">did not provide data</span>
<span id="an2" class="t" style="left:556.50px;top:421px;font-size:13.5px;line-height:15px;font-weight:400;color:#555;letter-spacing:-0.230px;">and have hence been</span>
<span id="an3" class="t" style="left:592.70px;top:438px;font-size:13.5px;line-height:15px;font-weight:400;color:#555;letter-spacing:-0.033px;">removed</span>
<span id="leg" class="t" style="left:265.80px;top:501px;font-size:13px;line-height:15px;font-weight:400;color:#333;letter-spacing:-0.133px;"># of Wind Turbines</span>
<span id="l1" class="t" style="left:387.20px;top:503px;font-size:13px;line-height:15px;font-weight:400;color:#555;letter-spacing:-0.734px;">1</span>
<span id="l2" class="t" style="left:593.30px;top:503px;font-size:13px;line-height:15px;font-weight:400;color:#555;letter-spacing:-0.211px;">12,750</span>
<span id="h3" class="t" style="left:215.00px;top:561px;font-size:20.5px;line-height:23px;font-weight:400;color:#626262;letter-spacing:-0.269px;-webkit-text-stroke:0.45px #626262;">However, some states Turbines</span>
<span id="h3b" class="t" style="left:500.00px;top:561px;font-size:20.5px;line-height:23px;font-weight:400;color:#626262;letter-spacing:-0.051px;-webkit-text-stroke:0.45px #626262;">are more effective than others....</span>
<span id="tx0" class="t" style="left:792.40px;top:169px;font-size:13.2px;line-height:15px;font-weight:400;color:#666;letter-spacing:0.151px;">Texas has by far the m</span>
<span id="tx1" class="t" style="left:792.40px;top:187px;font-size:13.2px;line-height:15px;font-weight:400;color:#666;letter-spacing:0.326px;">comfortably produces</span>
<span id="tx2" class="t" style="left:792.40px;top:204px;font-size:13.2px;line-height:15px;font-weight:400;color:#666;letter-spacing:0.326px;">these turbines.</span>
<span id="n1" class="t" style="left:793.00px;top:239px;font-size:16.5px;line-height:18px;font-weight:400;color:#444;letter-spacing:0.094px;text-decoration:underline;text-underline-offset:1px;text-decoration-thickness:1px;">Number of Househ</span>
<span id="n2" class="t" style="left:793.00px;top:262px;font-size:16.5px;line-height:18px;font-weight:400;color:#444;letter-spacing:0.148px;text-decoration:underline;text-underline-offset:1px;text-decoration-thickness:1px;">produced</span>
</body></html>
